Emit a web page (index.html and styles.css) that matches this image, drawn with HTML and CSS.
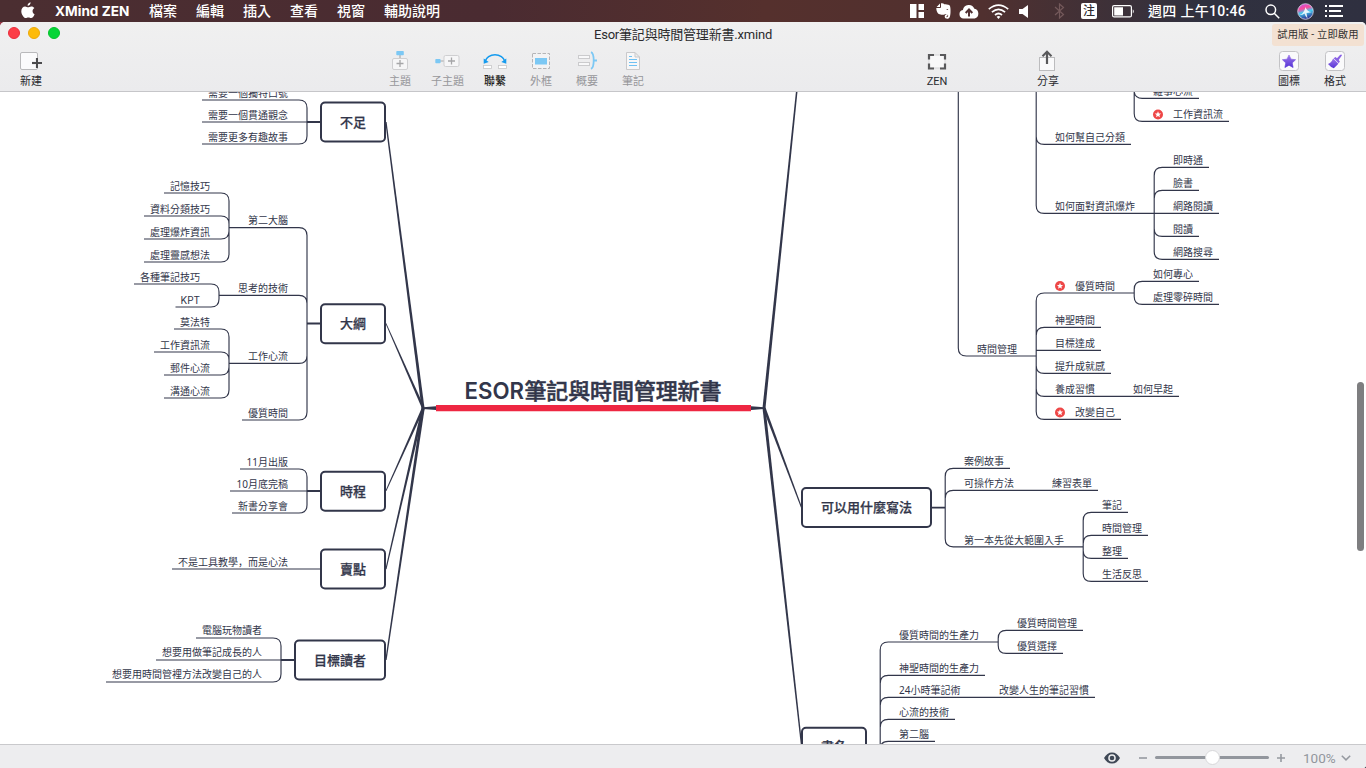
FILE: index.html
```html
<!DOCTYPE html>
<html lang="zh-Hant">
<head>
<meta charset="utf-8">
<title>Esor筆記與時間管理新書.xmind</title>
<link rel="stylesheet" href="styles.css">
</head>
<body>
<div class="menubar">
  <svg class="apple" width="14" height="17" viewBox="0 0 14 17"><path d="M9.6 0.3c.1 1.900-1.300 3.500-3 3.500C6.400 2 7.900.5 9.600.3zM13.600 12.200c-.8 2-2.100 3.800-3.500 3.800-1 0-1.500-.6-2.700-.6s-1.700.6-2.700.6C2.900 16 .3 12.400.3 9.200.3 6.100 2.200 4.400 4.100 4.400c1.200 0 2.200.8 3 .8.7 0 2-.9 3.400-.8 1 0 2.200.6 2.900 1.600-2.600 1.600-2.300 5.100.2 6.200z" fill="#fff"/></svg>
  <span class="app">XMind ZEN</span>
  <nav class="menus"><span>檔案</span><span>編輯</span><span>插入</span><span>查看</span><span>視窗</span><span>輔助說明</span></nav>
  <div class="tray">
    <svg class="t-grid" width="14" height="14" viewBox="0 0 14 14" fill="#fff"><path d="M0 0h6.500v14H0zM8.500 0H14v6H8.500zM8.500 8H14v6H8.500z"/></svg>
    <svg class="t-ever" width="15" height="16" viewBox="0 0 15 16" fill="#fff"><path d="M4 .5V4H.6zM5 .3c1.600-.3 2.700 0 3.300 1 1.600 0 3.600.1 4.900.8 1.200.7 1.500 4.200 1.300 7.500-.2 3.300-.6 6-2.700 6.100-1.900.1-3.100-.5-3.100-2.200 0-1.700 1.200-2.300 2.700-2v1.700c-.9-.1-1.200.2-1 .8.500.6 1.800.1 1.800-1.200 0-1.100-1.600-1.500-2.900-1.700-.5 1.100-3.500.8-5.600.2C1.300 10.700.3 7.500.3 5H4.400L5 4.300z"/><path d="M10.300 6.800c.3-1.200 1.700-1.200 2 .3z" fill="#513133"/></svg>
    <svg class="t-cloud" width="20" height="15" viewBox="0 0 20 15"><path d="M4.500 14.500a4.300 4.300 0 0 1-.6-8.500 6 6 0 0 1 11.500-1.200 5 5 0 0 1 .3 9.700z" fill="#fff"/><path d="M10 12.500V6M6.700 9 10 5.500 13.300 9" fill="none" stroke="#513133" stroke-width="2"/></svg>
    <svg class="t-wifi" width="21" height="15" viewBox="0 0 21 15" fill="none" stroke="#fff" stroke-width="1.700"><path d="M.8 5.200q9.700-8 19.400 0M3.900 8.200q6.600-5.600 13.200 0M7 11q3.500-3 7 0"/><path d="M8.600 12.700q1.900-1.500 3.800 0L10.500 15z" fill="#fff" stroke="none"/></svg>
    <svg class="t-vol" width="10" height="13" viewBox="0 0 10 13" fill="#fff"><path d="M0 4h3.500L9 0v13L3.500 9H0z"/></svg>
    <svg class="t-bt" width="11" height="16" viewBox="0 0 11 16" fill="none" stroke="#74595b" stroke-width="1.200"><path d="M1 4l8.500 7.500L5.500 15V1l4 3.500L1 12"/></svg>
    <span class="ime">注</span>
    <svg class="t-bat" width="23" height="13" viewBox="0 0 23 13"><rect x=".6" y=".6" width="18.800" height="11.300" rx="1.500" fill="none" stroke="#fff" stroke-width="1.200"/><path d="M2.200 2.200H11v8.200H2.200zM20.800 4.200q2 2.100 0 4.200z" fill="#fff"/></svg>
    <span class="clock">週四 上午10:46</span>
    <svg class="t-find" width="15" height="15" viewBox="0 0 15 15" fill="none" stroke="#fff" stroke-width="1.500"><circle cx="5.800" cy="5.800" r="4.800"/><path d="M9.200 9.200l5 5"/></svg>
    <svg class="t-siri" width="17" height="17" viewBox="0 0 17 17"><defs><linearGradient id="siri" x1="0" y1="0" x2="0.300" y2="1"><stop offset="0" stop-color="#b45af0"/><stop offset=".38" stop-color="#fb4a9c"/><stop offset=".62" stop-color="#42cdf2"/><stop offset="1" stop-color="#2e3f99"/></linearGradient></defs><circle cx="8.500" cy="8.500" r="7.800" fill="url(#siri)" stroke="#d8d8e8" stroke-width=".8"/><path d="M2 12q5-1 6.500-8Q10 9 15 9q-4 1-5.500 1l1 5.500Q8 13 7.500 10.500 5 12.500 2 12z" fill="#fff" opacity=".85"/></svg>
    <svg class="t-list" width="18" height="12" viewBox="0 0 18 12" fill="#fff"><path d="M0 0h2v2H0zM4 0h14v2H4zM0 5h2v2H0zM4 5h12v2H4zM0 10h2v2H0zM4 10h14v2H4z"/></svg>
  </div>
</div>

<div class="window">
  <header class="head">
    <div class="titlebar">
      <div class="lights"><i class="red"></i><i class="yellow"></i><i class="green"></i></div>
      <h1>Esor筆記與時間管理新書.xmind</h1>
      <a class="trial">試用版 - 立即啟用</a>
    </div>
    <div class="tools">
      <div class="tool new"><svg width="30" height="24" viewBox="0 0 30 24"><rect x="4.500" y="2.500" width="17" height="17" rx="1.500" fill="#fbfbfc" stroke="#b9b9bb"/><path d="M21 8v10M16 13h10" stroke="#ededef" stroke-width="4"/><path d="M21 8v10M16 13h10" stroke="#4b4b4d" stroke-width="2"/></svg>新建</div>
      <div class="tool off topic"><svg width="30" height="24" viewBox="0 0 30 24"><path d="M15 5v3.500" stroke="#aaa" stroke-width="1.200"/><rect x="11.300" y="1" width="7.500" height="4.300" rx=".8" fill="#7cc8f4"/><rect x="7.500" y="8.500" width="15" height="11" rx="1.500" fill="#f6f6f7" stroke="#cfcfd1"/><path d="M15 10v7M11.500 13.500h7" stroke="#a6a6a8" stroke-width="1.300"/></svg>主題</div>
      <div class="tool off wide"><svg width="30" height="24" viewBox="0 0 30 24"><path d="M7 11h4" stroke="#aaa" stroke-width="1.200"/><rect x="2.300" y="9" width="5.300" height="4.300" rx=".8" fill="#7cc8f4"/><rect x="11" y="5.500" width="15" height="11" rx="1.500" fill="#f6f6f7" stroke="#cfcfd1"/><path d="M18.500 7.500v7M15 11h7" stroke="#a6a6a8" stroke-width="1.300"/></svg>子主題</div>
      <div class="tool strong"><svg width="30" height="24" viewBox="0 0 30 24"><path d="M5 11.500a10.300 9 0 0 1 20 0" fill="none" stroke="#169bee" stroke-width="1.500"/><path d="M3.700 8.500v5.300l5-1.800zM26.300 8.500v5.300l-5-1.800z" fill="#169bee"/><rect x="3.500" y="15.500" width="8" height="3" fill="#fff" stroke="#c6c6c8" stroke-width=".8"/><rect x="18.500" y="15.500" width="8" height="3" fill="#fff" stroke="#c6c6c8" stroke-width=".8"/></svg>聯繫</div>
      <div class="tool off"><svg width="30" height="24" viewBox="0 0 30 24"><rect x="6.500" y="3.500" width="17" height="15" fill="#f3f3f4" stroke="#b5b5b7" stroke-dasharray="3.500 1.500"/><rect x="9" y="8" width="12" height="6.500" fill="#7cc8f4"/></svg>外框</div>
      <div class="tool off"><svg width="30" height="24" viewBox="0 0 30 24"><rect x="6.500" y="5.500" width="11" height="3" fill="#f8f8f9" stroke="#cbcbcd"/><rect x="6.500" y="12.500" width="11" height="3" fill="#f8f8f9" stroke="#cbcbcd"/><path d="M19 2.200c2.500 1 2.700 4 2.700 8.300s-.2 7.300-2.700 8.300M21.500 10.500H25" fill="none" stroke="#7cc8f4" stroke-width="1.800"/></svg>概要</div>
      <div class="tool off"><svg width="30" height="24" viewBox="0 0 30 24"><path d="M8.500 2.500H17l4.500 4.500v12.500h-13zM17 2.500V7h4.500" fill="#f7f7f8" stroke="#c9c9cb"/><path d="M11 6.500h3M11 9.500h8M11 12.500h8M11 15.500h8" stroke="#6fc1f3"/></svg>筆記</div>
      <div class="tool zen"><svg width="30" height="24" viewBox="0 0 30 24"><rect x="7" y="5" width="16" height="13" fill="#f8f8f9" stroke="#d5d5d7"/><path d="M7 9.500V5h5M18 5h5v4.500M23 13.500v5h-5M12 18.500H7v-5" fill="none" stroke="#59595b" stroke-width="2.200"/></svg>ZEN</div>
      <div class="tool share"><svg width="30" height="24" viewBox="0 0 30 24"><rect x="6.500" y="7.500" width="15" height="13" fill="#fafafb" stroke="#bcbcbe"/><path d="M14 14V3" stroke="#59595b" stroke-width="2.200"/><path d="M9.500 6.200L14 1.700l4.500 4.500" fill="none" stroke="#59595b" stroke-width="2"/></svg>分享</div>
      <div class="tool mark"><svg width="30" height="24" viewBox="0 0 30 24"><defs><linearGradient id="vio" x1="0" y1="0" x2="0" y2="1"><stop offset="0" stop-color="#9d77ea"/><stop offset="1" stop-color="#5533d6"/></linearGradient></defs><rect x="5.500" y="1.500" width="19" height="19" rx="3" fill="#fafafb" stroke="#c3c3c6"/><path d="M15 5l2 4.200 4.600.5-3.400 3.200.9 4.600L15 15.200l-4.100 2.300.9-4.600-3.400-3.200 4.600-.5z" fill="url(#vio)" stroke="url(#vio)" stroke-linejoin="round" stroke-width=".7"/></svg>圖標</div>
      <div class="tool"><svg width="30" height="24" viewBox="0 0 30 24"><rect x="5.500" y="1.500" width="19" height="19" rx="3" fill="#fafafb" stroke="#c3c3c6"/><path d="M22 5.300q-.6-1.500-2-.3l-3 3.200-1.500-1.200-1.800 1.200 5 5 1.200-1.800-1.200-1.500z" fill="#8a62e4"/><path d="M13.200 8.600l5.200 5.200-4.600 4.400q-3-1-5.800-4.300 3-.7 5.200-5.300z" fill="url(#vio)"/></svg>格式</div>
    </div>
  </header>

  <main class="canvas">
    <svg class="map" width="1366" height="652" viewBox="0 92 1366 652">
      <!-- tapered links from the central topic -->
      <g class="wedge">
        <path d="M385.300 122h1.300L424.500 408h-3z"/><path d="M385.500 323.500l.8-.3L424.500 407.500l-2.500 1z"/><path d="M385.500 490.700l.9.300L424.500 408.500l-2.500-1z"/><path d="M385.400 569l1.100.2L424.600 408.300l-2.900-.5z"/><path d="M385.300 660l1.300.1L424.700 408.200l-3-.3z"/>
        <path d="M801.400 40l1.300.1L765.500 408.100l-3-.2z"/><path d="M801 507.700l1-.4L765.500 407.500l-2.600 1z"/><path d="M801.100 747l1.300-.1L765.500 407.900l-3 .2z"/>
        <path d="M423 407.200L436 406.300v3.800L423 409zM764 407.200L751 406.300v3.800L764 409z"/>
      </g>
      <path class="bar" d="M436 408.200H751"/>
      <g class="stem">
        <path d="M307 122h14M307 323.500h14M307 491h14M281 660h14M932 507.700h13"/>
      </g>
      <g class="link">
        <path d="M202 100H299q8 0 8 8V136q0 8-8 8H202M202 122H307"/>
        <path d="M229 227.600H299q8 0 8 8V412q0 8-8 8H242M219 295.400H299q8 0 8 8M229 363.400H299q8 0 8-8"/>
        <path d="M164 193H221q8 0 8 8V254q0 8-8 8H144M144 216H221q8 0 8 8M144 239H221q8 0 8-8"/>
        <path d="M134 284H211q8 0 8 8V299q0 8-8 8H175.500"/>
        <path d="M174 329H221q8 0 8 8V390q0 8-8 8H164M154 352H221q8 0 8 8M164 375H221q8 0 8-8"/>
        <path d="M240 469H299q8 0 8 8V505q0 8-8 8H232M230 491H307"/>
        <path d="M172 569H321"/>
        <path d="M196 638H273q8 0 8 8V674q0 8-8 8H106M156 660H281"/>
        <path d="M958.300 92V348q0 8 8 8H1036"/>
        <path d="M1036.200 92V205.400q0 8 8 8H1219M1036.200 136.400q0 8 8 8H1131"/>
        <path d="M1134.200 92V113.400q0 8 8 8H1229M1134.200 92q1 6.400 8 6.400H1199"/>
        <path d="M1209 167.400H1162.200q-8 0-8 8V251.400q0 8 8 8H1219M1199 190.400H1162.200q-8 0-8 8M1199 236.400H1162.200q-8 0-8-8"/>
        <path d="M1134 293H1044.200q-8 0-8 8V411.400q0 8 8 8H1121M1101 327.400H1044.200q-8 0-8 8M1036.200 350.400H1101M1036.200 365.400q0 8 8 8H1111M1036.200 388.400q0 8 8 8H1179"/>
        <path d="M1199 281.400H1142.200q-8 0-8 8V296.400q0 8 8 8H1219"/>
        <path d="M1010 468.400H953.200q-8 0-8 8V538.800q0 8 8 8H1083M1098 490.400H953.200q-8 0-8 8"/>
        <path d="M1128 512.400H1091.200q-8 0-8 8V573.400q0 8 8 8H1148M1148 535.400H1091.200q-8 0-8 8M1128 558.400H1091.200q-8 0-8-8"/>
        <path d="M998 642H888.200q-8 0-8 8V747M985 675.400H888.200q-8 0-8 8M1095 697.400H888.200q-8 0-8 8M955 719.400H888.200q-8 0-8 8M935 741.400H888.200q-8 0-8 8"/>
        <path d="M1083 630.400H1006.200q-8 0-8 8V645.400q0 8 8 8H1063"/>
      </g>
      <g class="box">
        <rect x="321" y="102.500" width="64" height="39" rx="4"/><rect x="321" y="304.200" width="64" height="39" rx="4"/><rect x="321" y="471.700" width="64" height="39" rx="4"/><rect x="321" y="549.500" width="64" height="39" rx="4"/><rect x="295" y="640.500" width="90" height="39" rx="4"/><rect x="802" y="488" width="129" height="39" rx="4"/><rect x="802" y="727.700" width="64" height="39" rx="4"/>
      </g>
      <text class="center latin" x="464.500" y="399" textLength="59.500" lengthAdjust="spacingAndGlyphs">ESOR</text><text class="center" x="524.500" y="399" textLength="197">筆記與時間管理新書</text>
      <g class="main">
        <text x="353" y="126.500">不足</text><text x="353" y="328">大綱</text><text x="353" y="495.500">時程</text><text x="353" y="573.500">賣點</text><text x="340" y="664.500">目標讀者</text><text x="866.500" y="511.500">可以用什麼寫法</text><text x="834" y="751">書名</text>
      </g>
      <g class="leaf end">
        <text x="288" y="97">需要一個獨特口號</text><text x="288" y="119">需要一個貫通觀念</text><text x="288" y="141">需要更多有趣故事</text>
        <text x="288" y="224">第二大腦</text><text x="288" y="292">思考的技術</text><text x="288" y="360">工作心流</text><text x="288" y="417">優質時間</text>
        <text x="210" y="190">記憶技巧</text><text x="210" y="213">資料分類技巧</text><text x="210" y="236">處理爆炸資訊</text><text x="210" y="259">處理靈感想法</text>
        <text x="200" y="281">各種筆記技巧</text><text class="latin" x="200" y="304">KPT</text>
        <text x="210" y="326">莫法特</text><text x="210" y="349">工作資訊流</text><text x="210" y="372">郵件心流</text><text x="210" y="395">溝通心流</text>
        <text x="288" y="466">11月出版</text><text x="288" y="488">10月底完稿</text><text x="288" y="510">新書分享會</text>
        <text x="288" y="566" lang="zh-Hans" class="comma">不是工具教學，而是心法</text>
        <text x="262" y="634">電腦玩物讀者</text><text x="262" y="656">想要用做筆記成長的人</text><text x="262" y="678">想要用時間管裡方法改變自己的人</text>
      </g>
      <g class="leaf">
        <text x="1153" y="95">雜事心流</text><text x="1173" y="118">工作資訊流</text><text x="1055" y="141">如何幫自己分類</text><text x="1055" y="210">如何面對資訊爆炸</text>
        <text x="1173" y="164">即時通</text><text x="1173" y="187">臉書</text><text x="1173" y="210">網路閱讀</text><text x="1173" y="233">閱讀</text><text x="1173" y="256">網路搜尋</text>
        <text x="977" y="353">時間管理</text><text x="1075" y="290">優質時間</text><text x="1153" y="278">如何專心</text><text x="1153" y="301">處理零碎時間</text>
        <text x="1055" y="324">神聖時間</text><text x="1055" y="347">目標達成</text><text x="1055" y="370">提升成就感</text><text x="1055" y="393">養成習慣</text><text x="1133" y="393">如何早起</text><text x="1075" y="416">改變自己</text>
        <text x="964" y="465">案例故事</text><text x="964" y="487">可操作方法</text><text x="1052" y="487">練習表單</text><text x="964" y="544">第一本先從大範圍入手</text>
        <text x="1102" y="509">筆記</text><text x="1102" y="532">時間管理</text><text x="1102" y="555">整理</text><text x="1102" y="578">生活反思</text>
        <text x="899" y="639">優質時間的生產力</text><text x="1017" y="627">優質時間管理</text><text x="1017" y="650">優質選擇</text><text x="899" y="672">神聖時間的生產力</text><text x="899" y="694">24小時筆記術</text><text x="999" y="694">改變人生的筆記習慣</text><text x="899" y="716">心流的技術</text><text x="899" y="738">第二腦</text>
      </g>
      <defs><g id="star"><circle r="5" fill="#ee4747"/><path d="M0-3.200L.9-1.100 3.100-.9 1.400.6 1.900 2.800 0 1.600-1.900 2.800-1.400.6-3.100-.9-.9-1.100z" fill="#fff"/></g></defs>
      <use href="#star" x="1158" y="114.500"/><use href="#star" x="1060" y="286"/><use href="#star" x="1060" y="412.500"/>
    </svg>
    <div class="scroll"></div>
  </main>

  <footer class="status">
    <svg class="eye" width="16" height="12" viewBox="0 0 16 12"><path d="M0 6Q3 .4 8 .4T16 6Q13 11.600 8 11.600T0 6z" fill="#3f4856"/><circle cx="8" cy="6" r="3.800" fill="#ededef"/><circle cx="8" cy="6" r="2.300" fill="#3f4856"/></svg>
    <svg class="minus" width="8" height="8" viewBox="0 0 8 8"><path d="M0 4h8" stroke="#9599a0" stroke-width="1.600"/></svg>
    <div class="slider"><i></i></div>
    <svg class="plus" width="8" height="8" viewBox="0 0 8 8"><path d="M0 4h8M4 0v8" stroke="#9599a0" stroke-width="1.600"/></svg>
    <span class="zoom">100%</span>
    <svg class="chev" width="10" height="6" viewBox="0 0 10 6"><path d="M.8.7L5 4.900 9.200.7" fill="none" stroke="#9599a0" stroke-width="1.500"/></svg>
  </footer>
</div>
</body>
</html>
```
FILE: styles.css
```css
* { box-sizing: border-box; }
body {
  margin: 0;
  width: 1366px;
  height: 768px;
  overflow: hidden;
  display: flex;
  flex-direction: column;
  background: linear-gradient(90deg, #983546 0, #503035 20px, #30313f 100%);
  font-family: "Roboto", "Noto Sans CJK TC", sans-serif;
}
svg { display: block; flex: none; }

.menubar {
  height: 22px;
  flex: none;
  display: flex;
  align-items: center;
  padding-left: 21px;
  color: #fff;
  font-size: 14px;
  line-height: 22px;
  font-weight: 500;
  white-space: nowrap;
  background: linear-gradient(90deg, #4b2e31 0, #4a2b31 36%, #55302d 56%, #50302f 72%, #30313f 88%, #2f3040 100%);
}
.apple { margin-top: -2px; }
.app { width: 75px; margin-left: 20px; font: 700 13.600px/22px "Inter", sans-serif; }
.menus { display: flex; gap: 19px; margin-left: 19px; }
.tray { display: flex; align-items: center; margin-left: auto; padding-right: 23px; }
.t-ever { margin-left: 12px; }
.t-cloud { margin-left: 8px; }
.t-wifi { margin-left: 9px; }
.t-vol { margin-left: 10px; }
.t-bt { margin-left: 25px; }
.ime {
  width: 16px; height: 16px; margin-left: 16px;
  border-radius: 2px; background: #fff; color: #302b30;
  font-size: 12px; line-height: 16px; text-align: center;
}
.t-bat { margin-left: 15px; }
.clock { width: 98px; margin-left: 13px; letter-spacing: 0.3px; }
.t-find { margin-left: 19px; }
.t-siri { margin-left: 17px; }
.t-list { margin-left: 11px; }

.window {
  height: 746px;
  display: flex;
  flex-direction: column;
  background: #fff;
  border-radius: 5px 5px 3px 0;
  overflow: hidden;
}
.head { height: 70px; flex: none; background: linear-gradient(#f0f0f0, #ebebed); border-bottom: 1px solid #c6c6c9; }
.titlebar { height: 25px; display: grid; grid-template-columns: 1fr 400px 1fr; }
.lights { display: flex; gap: 8px; padding: 5px 0 0 8px; }
.lights i { width: 12px; height: 12px; border-radius: 50%; }
.red { background: #fc3d46; border: 1px solid #ea2d3c; }
.yellow { background: #fdbb0a; border: 1px solid #eda908; }
.green { background: #06d537; border: 1px solid #04c22b; }
h1 { margin: 0; font-size: 13px; font-weight: 400; letter-spacing: -0.2px; line-height: 26px; text-align: center; color: #2b2b2d; white-space: nowrap; }
.trial {
  justify-self: end; width: 92px; height: 22px; margin: 2px 2px 0 0;
  border-radius: 3px; background: #f3e1d2; color: #333;
  font-size: 10.300px; letter-spacing: 0.150px; line-height: 22px; text-align: center; white-space: nowrap;
}
.tools { display: flex; }
.tool {
  width: 46px; padding-top: 3px; flex: none;
  display: flex; flex-direction: column; align-items: center;
  font-size: 11px; line-height: 16px; color: #2a2b30;
}
.new { margin-left: 8px; }
.topic { margin-left: 323px; }
.wide { width: 49px; }
.off { color: #97979b; }
.strong { font-weight: 500; color: #1d1d20; }
.zen { margin-left: 258px; }
.share { margin-left: 65px; }
.mark { margin-left: 195px; }

.canvas { position: relative; flex: 1; background: #fff; }
.map { font-family: "Noto Sans", "Noto Sans CJK TC", sans-serif; fill: #32364a; }
.link { fill: none; stroke: #32364a; stroke-width: 1.150; }
.stem { fill: none; stroke: #32364a; stroke-width: 1.800; }
.box { fill: #fff; stroke: #32364a; stroke-width: 2; }
.bar { stroke: #ee2742; stroke-width: 6.300; }
.center { font-size: 22px; font-weight: 500; stroke: #32364a; stroke-width: 0.500px; }
.center.latin { font-size: 22.500px; font-weight: 600; stroke: none; }
.latin { font-family: "Inter", sans-serif; }
.main { font-size: 13px; font-weight: 500; text-anchor: middle; stroke: #32364a; stroke-width: 0.250px; }
.leaf { font-size: 10px; }
.end { text-anchor: end; }
.comma { font-family: "Noto Sans CJK SC", sans-serif; }
.scroll { position: absolute; right: 2px; top: 290px; width: 7px; height: 169px; border-radius: 4px; background: #7e7e80; }

.status {
  height: 24px; flex: none; display: flex; align-items: center;
  padding: 2px 0 0 1104px;
  background: #ededef; border-top: 1px solid #c9c9cc;
}
.minus { margin-left: 19px; }
.slider { width: 114px; height: 3px; margin-left: 8px; border-radius: 2px; background: #92969d; display: flex; align-items: center; justify-content: center; }
.slider i { width: 15px; height: 15px; border-radius: 50%; background: #fff; border: 1px solid #d8d8da; flex: none; }
.plus { margin-left: 8px; }
.zoom { width: 33px; margin-left: 18px; font-size: 13.500px; line-height: 20px; color: #92969d; }
.chev { margin-left: 5px; }
```
